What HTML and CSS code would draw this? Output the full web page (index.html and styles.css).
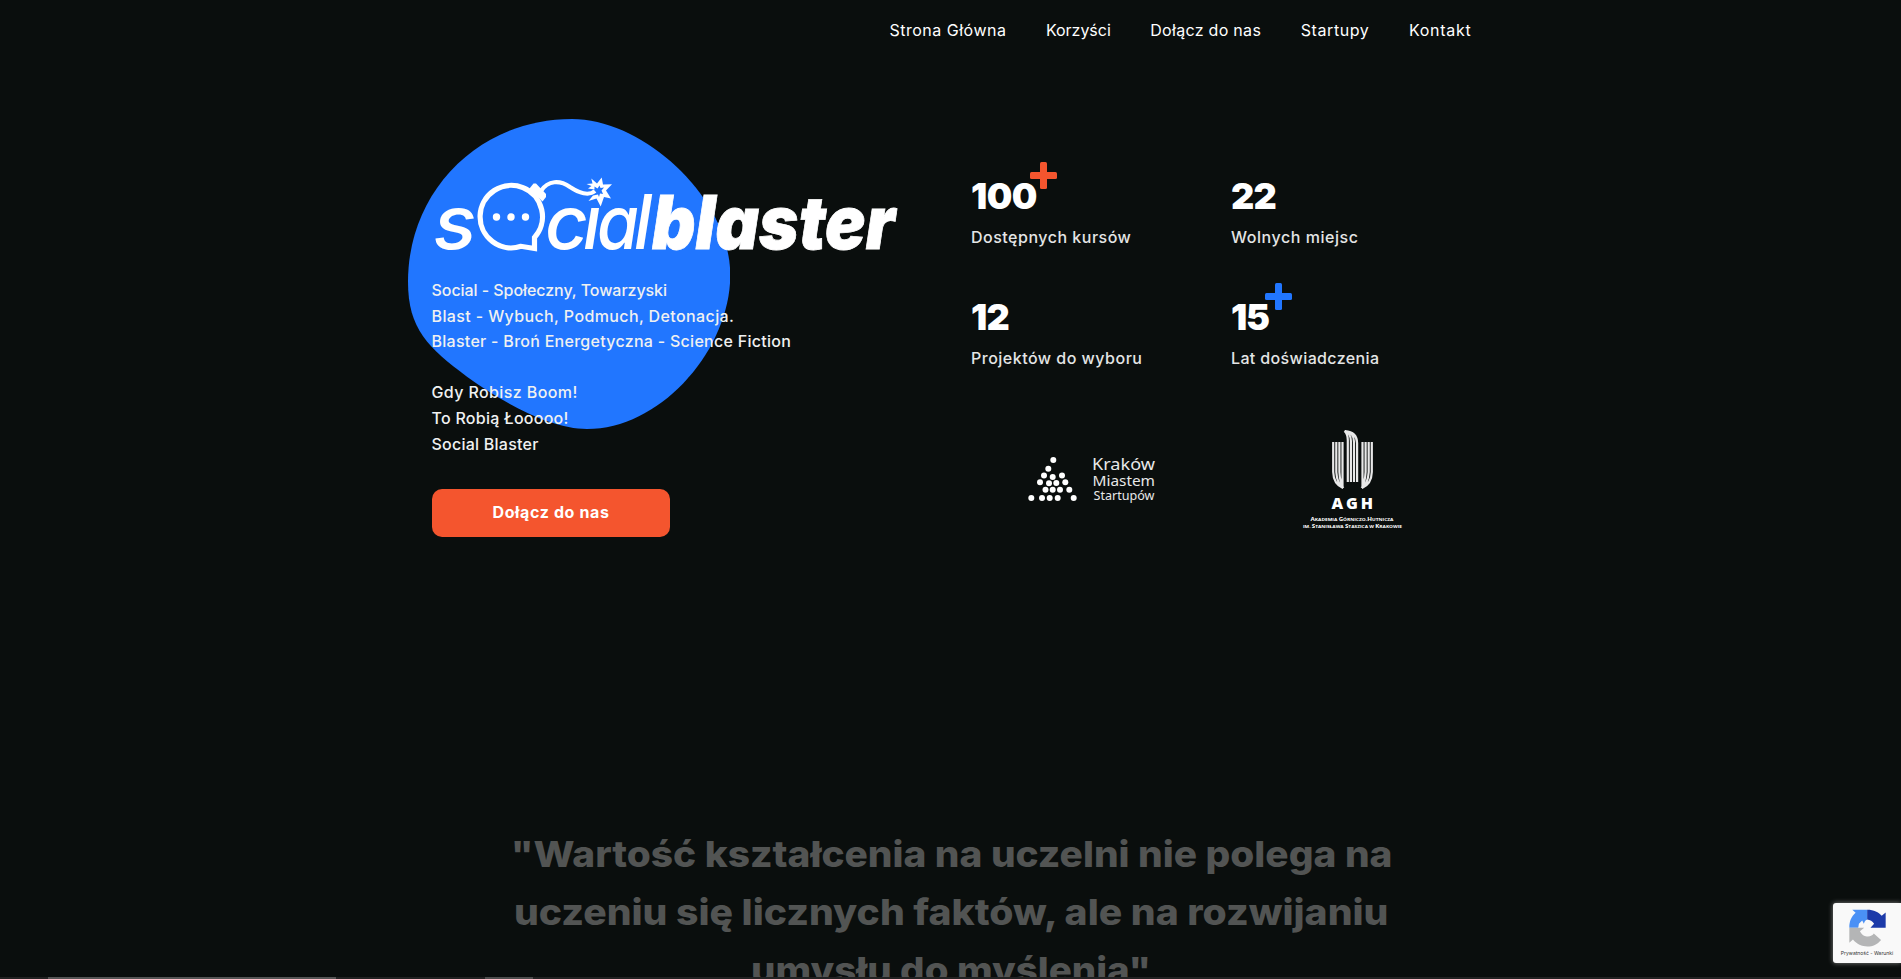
FILE: index.html
```html
<!DOCTYPE html>
<html lang="pl">
<head>
<meta charset="utf-8">
<title>Social Blaster</title>
<link rel="stylesheet" href="styles.css">
</head>
<body>
<header class="header">
  <nav class="nav">
    <a class="n1">Strona Główna</a>
    <a class="n2">Korzyści</a>
    <a class="n3">Dołącz do nas</a>
    <a class="n4">Startupy</a>
    <a class="n5">Kontakt</a>
  </nav>
</header>
<main class="hero">
  <section class="intro">
    <svg class="blob" viewBox="0 0 968 931" preserveAspectRatio="none" aria-hidden="true"><path fill="#2176ff" d="M492 0C710 0 967 240 967 468C967 690 760 930 537 930C430 930 290 855 177 773C60 685 0 630 0 488C0 215 215 0 492 0Z"/></svg>
    <svg class="logo" viewBox="432 172 468 84" role="img" aria-label="socialblaster">
      <g class="logo-text">
        <text x="433.500" y="249" textLength="43" lengthAdjust="spacingAndGlyphs">s</text>
        <text y="249"><tspan x="545" textLength="43" lengthAdjust="spacingAndGlyphs">c</tspan><tspan x="583" textLength="18" lengthAdjust="spacingAndGlyphs">ı</tspan><tspan x="597" textLength="42" lengthAdjust="spacingAndGlyphs">a</tspan><tspan x="634" textLength="18" lengthAdjust="spacingAndGlyphs">l</tspan></text>
        <text class="logo-bold" x="652" y="249" textLength="243" lengthAdjust="spacingAndGlyphs">blaster</text>
      </g>
      <path d="M534.500 237.500A31.200 31.200 0 1 0 521 246.300L534.500 248.500Z" fill="none" stroke="#fff" stroke-width="5.200"/>
      <path d="M529.500 188.500L533.500 183.500H536L546 194V197L542.500 201.500Z" fill="#fff"/>
      <path d="M541 191C548 180 560 180 570 187C579 193 589 196 595 191" fill="none" stroke="#fff" stroke-width="4.200"/>
      <path fill="#fff" d="M591.300 178.500L597 183.500L601.700 177.500L603 184.500L612 184.300L606 190.500L611 198.500L604 197L600.700 206.500L596.500 198.500L588.500 201L593 195.500L598 194.500L599 197L600 193.500L603 194L601.500 190.500L604 187.500L600.500 188L599.500 185.500L597.500 188.500L594.500 186.500L594.500 189.500L588 188.500L591.500 186L586.500 184L592.500 183.500Z"/>
      <g fill="#fff"><circle cx="496.500" cy="217" r="3.700"/><circle cx="511" cy="217" r="3.700"/><circle cx="525.500" cy="217" r="3.700"/></g>
    </svg>
    <p class="lead">
      <span class="l1">Social - Społeczny, Towarzyski</span><br>
      <span class="l2">Blast - Wybuch, Podmuch, Detonacja.</span><br>
      <span class="l3">Blaster - Broń Energetyczna - Science Fiction</span><br><br>
      <span class="l4">Gdy Robisz Boom!</span><br>
      <span class="l5">To Robią Łooooo!</span><br>
      <span class="l6">Social Blaster</span>
    </p>
    <a class="button">Dołącz do nas</a>
  </section>
  <section class="facts">
    <div class="stats">
      <div class="stat"><strong class="s1">100</strong><i class="plus plus-orange"></i><span class="t1">Dostępnych kursów</span></div>
      <div class="stat"><strong class="s2">22</strong><span class="t2">Wolnych miejsc</span></div>
      <div class="stat"><strong class="s3">12</strong><span class="t3">Projektów do wyboru</span></div>
      <div class="stat"><strong class="s4">15</strong><i class="plus plus-blue"></i><span class="t4">Lat doświadczenia</span></div>
    </div>
    <div class="partners">
      <svg class="krakow" viewBox="1020 450 140 60">
        <g fill="#fff"><circle cx="1053.300" cy="460" r="3"/><circle cx="1048.300" cy="468.700" r="3"/><circle cx="1044" cy="475.500" r="3"/><circle cx="1052.700" cy="477" r="3"/><circle cx="1062" cy="475.500" r="3"/><circle cx="1040" cy="482.300" r="3"/><circle cx="1049" cy="483.300" r="3"/><circle cx="1056.300" cy="483" r="3"/><circle cx="1065.300" cy="482.300" r="3"/><circle cx="1045.500" cy="489.700" r="3"/><circle cx="1052.700" cy="489.700" r="3"/><circle cx="1060" cy="489.700" r="3"/><circle cx="1069.300" cy="489.700" r="3"/><circle cx="1031.300" cy="498" r="3"/><circle cx="1042" cy="498" r="3"/><circle cx="1049.700" cy="498" r="3"/><circle cx="1057.700" cy="498" r="3"/><circle cx="1073.700" cy="498" r="3"/></g>
        <g fill="#e8e8e8" font-family="'Noto Sans', sans-serif"><text x="1092" y="470" font-size="17" textLength="63" lengthAdjust="spacingAndGlyphs">Kraków</text><text x="1092.500" y="485.700" font-size="14.500" textLength="62.500" lengthAdjust="spacingAndGlyphs">Miastem</text><text x="1093.500" y="500" font-size="12.500" textLength="61" lengthAdjust="spacingAndGlyphs">Startupów</text></g>
      </svg>
      <svg class="agh" viewBox="1300 428 106 104">
        <g fill="none" stroke="#e8e8e8" stroke-width="2.200"><path d="M1333.200 442V472Q1333.500 484 1343 488M1336.300 442V472Q1337 484 1343.300 488M1339.400 442V472Q1340 483 1343.300 488M1342.500 442V487"/><path d="M1371.800 442V472Q1371.500 484 1362 488M1368.700 442V472Q1368 484 1361.700 488M1365.600 442V472Q1365 483 1361.700 488M1362.500 442V487"/><path d="M1347.800 482V440Q1347.800 434 1344.500 431M1350.900 482V441Q1350.800 433 1344.500 431M1354 482V442Q1354 432 1345 431M1357.100 482V443Q1357 432 1345 431"/></g>
        <g fill="#fff" font-family="'Open Sans', sans-serif" font-weight="800"><text x="1331.500" y="508.500" font-size="16" textLength="41.500">AGH</text>
        <g font-size="4.200" font-weight="700"><text x="1310.500" y="521" textLength="83" lengthAdjust="spacingAndGlyphs"><tspan font-size="5.300">A</tspan>KADEMIA <tspan font-size="5.300">G</tspan>ÓRNICZO-<tspan font-size="5.300">H</tspan>UTNICZA</text><text x="1303" y="528" textLength="99" lengthAdjust="spacingAndGlyphs">IM. <tspan font-size="5.300">S</tspan>TANISŁAWA <tspan font-size="5.300">S</tspan>TASZICA W <tspan font-size="5.300">K</tspan>RAKOWIE</text></g></g>
      </svg>
    </div>
  </section>
</main>
<blockquote class="quote"><span class="q1">"Wartość kształcenia na uczelni nie polega na</span><span class="q2">uczeniu się licznych faktów, ale na rozwijaniu</span><span class="q3">umysłu do myślenia"</span></blockquote>
<div class="edge"><i class="edge-long"></i><i class="edge-short"></i></div>
<aside class="captcha">
  <svg viewBox="146 88 112 114" width="37" height="38"><path fill="#4a90f5" d="M201 90H156L166 99C153 110 147 125 147 144H174L176 132L186 122L191 132C193 125 197 120 201 120Z"/><path fill="#1c3aa9" d="M201 90C222 90 235 98 245 108L257 98V144H211L222 132C217 124 210 120 201 119Z"/><path fill="#b4b5b6" d="M147 144H192L179 155C185 167 195 171 203 171C212 171 218 167 221 162L243 181C232 195 218 201 202 201C184 201 170 194 158 180L147 190Z"/></svg>
  <span>Prywatność - Warunki</span>
</aside>
</body>
</html>
```
FILE: styles.css
```css
* { box-sizing: border-box; }
body { margin: 0; height: 979px; overflow: hidden; background: #0a0e0d; color: #fff; font-family: Inter, sans-serif; position: relative; }
.header { height: 63px; padding: 20px 0 0 889.500px; }
.nav { display: flex; gap: 39.500px; font-size: 16px; line-height: 20px; }
.nav a { white-space: nowrap; }
.n1 { letter-spacing: .5px; }
.n2 { letter-spacing: -.03px; }
.n3 { letter-spacing: .3px; }
.n4 { letter-spacing: .6px; }
.n5 { letter-spacing: .7px; }

.hero { display: flex; padding-left: 432px; height: 520px; }
.intro { position: relative; width: 539px; padding-top: 109px; }
.blob { position: absolute; left: -24.300px; top: 56px; width: 322.600px; height: 310.300px; }
.logo { position: relative; display: block; width: 468px; height: 84px; overflow: visible; }
.logo-text { fill: #fff; font-style: italic; font-weight: 500; font-size: 75px; }
.logo-bold { font-weight: 900; font-size: 74px; stroke: #fff; stroke-width: .8px; }
.lead { position: relative; margin: 22px 0 32px -.500px; font-size: 16px; font-weight: 500; line-height: 25.600px; color: #f0f1f1; white-space: nowrap; }
.l1 { letter-spacing: -.06px; }
.l2 { letter-spacing: .38px; }
.l3 { letter-spacing: .28px; }
.l4 { letter-spacing: .39px; }
.l5 { letter-spacing: .26px; }
.l6 { letter-spacing: .24px; }
.button { display: flex; align-items: center; justify-content: center; width: 238px; height: 48px; border-radius: 10px; background: #f4552e; font-size: 16px; font-weight: 700; letter-spacing: .62px; padding-bottom: 2px; }

.stats { display: grid; grid-template-columns: 260px 260px; grid-auto-rows: 121px; padding-top: 110px; }
.stat { position: relative; }
.stat strong { display: block; width: max-content; font-size: 36px; line-height: 46px; font-weight: 900; }
.stat span { display: inline-block; margin-top: 5px; font-size: 16px; line-height: 26px; font-weight: 500; color: #e4e5e5; white-space: nowrap; }
.s1 { letter-spacing: -.5px; }
.s2 { letter-spacing: -.7px; }
.s3 { letter-spacing: -.9px; }
.s4 { letter-spacing: -1.200px; }
.t1 { letter-spacing: .5px; }
.t2 { letter-spacing: .54px; }
.t3 { letter-spacing: .49px; }
.t4 { letter-spacing: .37px; }
.plus { position: absolute; top: -11px; width: 27px; height: 27px; }
.plus::before, .plus::after { content: ""; position: absolute; border-radius: 1.500px; background: currentColor; }
.plus::before { left: 0; top: 10px; width: 27px; height: 7px; }
.plus::after { left: 10px; top: 0; width: 7px; height: 27px; }
.plus-orange { left: 59px; color: #f4552e; }
.plus-blue { left: 34px; color: #2176ff; }
.partners { display: flex; gap: 140px; padding: 13px 0 0 49px; }
.krakow { width: 140px; height: 60px; margin-top: 22px; }
.agh { width: 106px; height: 104px; }

.quote { display: flex; flex-direction: column; align-items: center; margin: 242px 0 0; padding-left: 2px; font-size: 36px; font-weight: 800; line-height: 58px; color: #525453; white-space: nowrap; }
.q1 { transform: scaleX(1.079); }
.q2 { transform: scaleX(1.087); }
.q3 { transform: scaleX(1.069); }
.edge { position: absolute; left: 0; right: 0; top: 977px; height: 2px; background: #222; display: flex; padding-left: 48px; gap: 149px; }
.edge-long { width: 288px; background: #555; }
.edge-short { width: 48px; background: #4d4d4d; }
.captcha { position: absolute; right: 0; top: 903px; width: 68px; height: 60px; display: flex; flex-direction: column; align-items: center; padding-top: 6px; border-radius: 3px 0 0 3px; background: #f9f9f9; box-shadow: 0 0 5px #808080; color: #333; }
.captcha svg { display: block; }
.captcha span { margin-top: 3px; font-size: 5px; line-height: 7px; white-space: nowrap; }
```
